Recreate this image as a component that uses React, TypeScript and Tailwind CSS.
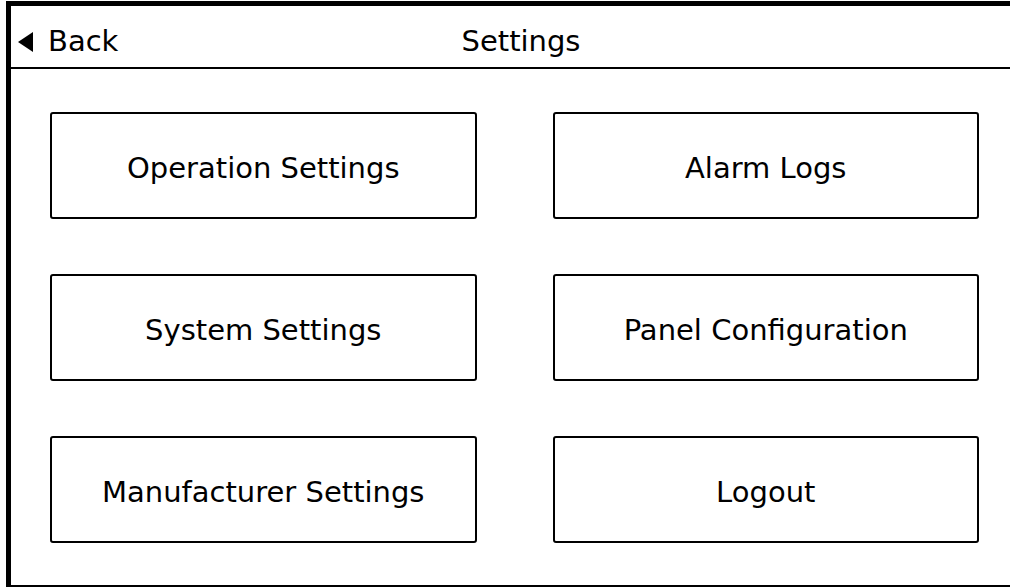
const buttons = [
  "Operation Settings",
  "Alarm Logs",
  "System Settings",
  "Panel Configuration",
  "Manufacturer Settings",
  "Logout",
];

const App = () => {
  return (
    <div
      className="w-[1010px] h-[587px] overflow-hidden bg-white pl-[6px] pt-[1px] text-black"
      style={{ fontFamily: '"DejaVu Sans", Verdana, sans-serif' }}
    >
      <div className="w-[1016px] h-[586px] shrink-0 border-t-[5px] border-l-[5px] border-b-2 border-black flex flex-col">
        {/* Header */}
        <div className="h-[63px] shrink-0 border-b-2 border-black grid grid-cols-[1fr_auto_1fr] items-center pl-[9px] pt-[10px] text-[29px]">
          <button className="flex items-center gap-[15px] justify-self-start -ml-[2px]">
            <svg width="15" height="20" viewBox="0 0 15 20">
              <polygon points="15,0 15,20 0,10" fill="black" />
            </svg>
            <span>Back</span>
          </button>
          <span>Settings</span>
          <span />
        </div>

        {/* Menu grid */}
        <div className="grid grid-cols-2 gap-x-[76px] gap-y-[55px] pt-[43px] pl-[39px] pr-[43px]">
          {buttons.map((label) => (
            <button
              key={label}
              className="h-[107px] border-[2.5px] border-black rounded-[3px] flex items-center justify-center text-[29px] pt-[7px]"
            >
              {label}
            </button>
          ))}
        </div>
      </div>
    </div>
  );
};

export default App;
